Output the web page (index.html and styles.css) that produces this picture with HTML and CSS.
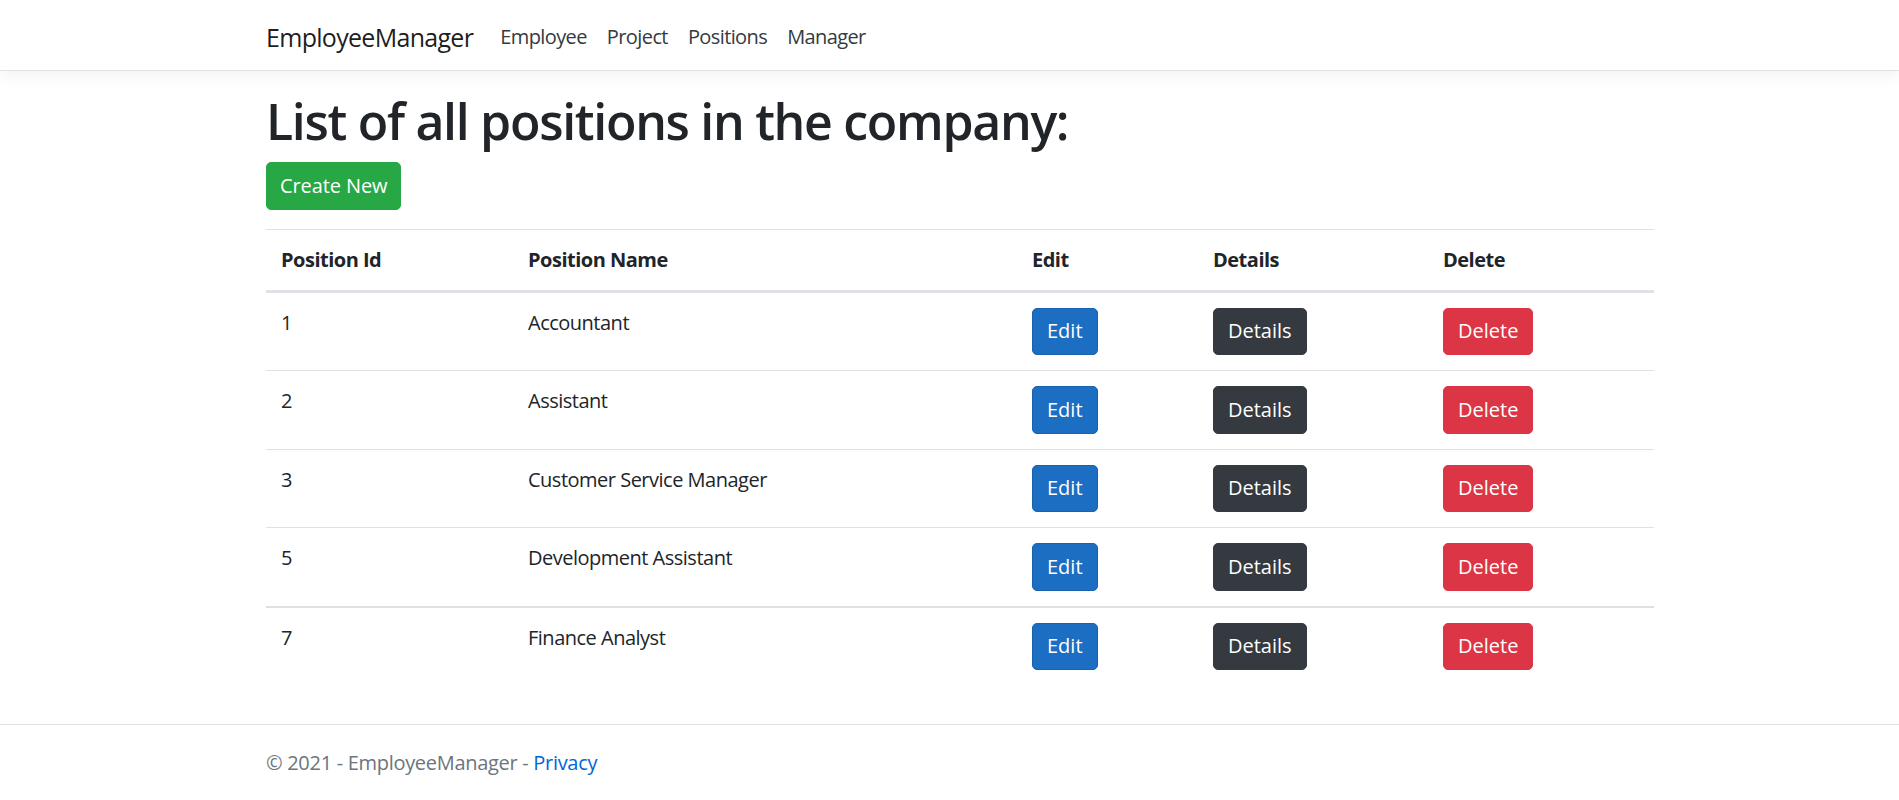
FILE: index.html
```html
<!DOCTYPE html>
<html lang="en">
<head>
<meta charset="utf-8">
<title>Positions - EmployeeManager</title>
<link rel="stylesheet" href="styles.css">
</head>
<body>
<div class="page">
  <header class="topbar">
    <div class="container nav-inner">
      <a class="brand" href="#">EmployeeManager</a>
      <nav class="nav">
        <a class="nav-link" href="#">Employee</a>
        <a class="nav-link" href="#">Project</a>
        <a class="nav-link" href="#">Positions</a>
        <a class="nav-link" href="#">Manager</a>
      </nav>
    </div>
  </header>

  <main class="container main">
    <h1 class="title">List of all positions in the company:</h1>
    <p class="actions"><a class="btn btn-success" href="#">Create New</a></p>
    <table class="table">
      <colgroup>
        <col class="c1"><col class="c2"><col class="c3"><col class="c4"><col class="c5">
      </colgroup>
      <thead>
        <tr>
          <th>Position Id</th>
          <th>Position Name</th>
          <th>Edit</th>
          <th>Details</th>
          <th>Delete</th>
        </tr>
      </thead>
      <tbody>
        <tr>
          <td>1</td><td>Accountant</td>
          <td><a class="btn btn-primary" href="#">Edit</a></td>
          <td><a class="btn btn-dark" href="#">Details</a></td>
          <td><a class="btn btn-danger" href="#">Delete</a></td>
        </tr>
        <tr>
          <td>2</td><td>Assistant</td>
          <td><a class="btn btn-primary" href="#">Edit</a></td>
          <td><a class="btn btn-dark" href="#">Details</a></td>
          <td><a class="btn btn-danger" href="#">Delete</a></td>
        </tr>
        <tr>
          <td>3</td><td>Customer Service Manager</td>
          <td><a class="btn btn-primary" href="#">Edit</a></td>
          <td><a class="btn btn-dark" href="#">Details</a></td>
          <td><a class="btn btn-danger" href="#">Delete</a></td>
        </tr>
        <tr>
          <td>5</td><td>Development Assistant</td>
          <td><a class="btn btn-primary" href="#">Edit</a></td>
          <td><a class="btn btn-dark" href="#">Details</a></td>
          <td><a class="btn btn-danger" href="#">Delete</a></td>
        </tr>
        <tr class="row-thick">
          <td>7</td><td>Finance Analyst</td>
          <td><a class="btn btn-primary" href="#">Edit</a></td>
          <td><a class="btn btn-dark" href="#">Details</a></td>
          <td><a class="btn btn-danger" href="#">Delete</a></td>
        </tr>
      </tbody>
    </table>
  </main>

  <footer class="footer">
    <div class="container">&copy; 2021 - EmployeeManager - <a class="footer-link" href="#">Privacy</a></div>
  </footer>
</div>
</body>
</html>
```

FILE: styles.css
```css
* { box-sizing: border-box; }

html, body {
  margin: 0;
  padding: 0;
}

body {
  font-family: "Open Sans", "Noto Sans", "Liberation Sans", sans-serif;
  font-size: 20px;
  line-height: 30px;
  letter-spacing: -0.5px;
  color: #212529;
  background: #fff;
}

.page {
  min-height: 800px;
  height: 800px;
  display: flex;
  flex-direction: column;
  overflow: hidden;
}

.container {
  width: 1388px;
  margin-left: 266px;
}

/* Top navigation */
.topbar {
  height: 71px;
  border-bottom: 1px solid #dee2e6;
  box-shadow: 0 5px 15px rgba(0, 0, 0, 0.05);
  background: #fff;
  flex: none;
}

.nav-inner {
  height: 70px;
  padding-top: 4px;
  display: flex;
  align-items: center;
}

.brand {
  font-size: 25px;
  line-height: 37px;
  letter-spacing: -0.7px;
  color: rgba(0, 0, 0, 0.9);
  text-decoration: none;
  margin-right: 17px;
}

.nav {
  display: flex;
  align-items: center;
}

.nav-link {
  padding: 0 10px;
  font-size: 20px;
  letter-spacing: -0.6px;
  color: #343a40;
  text-decoration: none;
}

/* Main */
.main {
  padding-top: 20px;
  flex: none;
}

.title {
  margin: 0 0 10px;
  font-size: 50px;
  line-height: 61px;
  font-weight: 600;
  letter-spacing: -1.3px;
}

.actions {
  margin: 0 0 20px;
  line-height: 0;
  letter-spacing: 0;
}

.btn {
  display: inline-block;
  padding: 7.75px 14px;
  border: 1px solid transparent;
  border-radius: 5px;
  font-size: 20px;
  line-height: 30px;
  letter-spacing: 0;
  text-decoration: none;
  color: #fff;
  vertical-align: top;
}

.btn-success { background: #28a745; border-color: #28a745; padding-left: 13px; padding-right: 13px; letter-spacing: -0.1px; }
.btn-primary { background: #1b6ec2; border-color: #1861ac; }
.btn-dark { background: #343a40; border-color: #343a40; }
.btn-danger { background: #dc3545; border-color: #dc3545; }

/* Table */
.table {
  width: 1388px;
  margin-top: -1px;
  border-collapse: collapse;
  table-layout: fixed;
}

.c1 { width: 247px; }
.c2 { width: 504px; }
.c3 { width: 181px; }
.c4 { width: 230px; }
.c5 { width: 226px; }

.table th,
.table td {
  padding: 15px;
  text-align: left;
  vertical-align: top;
  border-top: 1px solid #dee2e6;
}

.table th {
  font-weight: 700;
  border-bottom: 3px solid #dee2e6;
}

.table thead + tbody tr:first-child td { border-top: 0; }

.table .row-thick td { border-top: 2px solid #dee2e6; }

/* Footer */
.footer {
  margin-top: auto;
  border-top: 1px solid #dee2e6;
  line-height: 75px;
  height: 76px;
  letter-spacing: -0.3px;
  color: #6c757d;
  white-space: nowrap;
  flex: none;
}

.footer-link {
  color: #0366d6;
  text-decoration: none;
}
```
